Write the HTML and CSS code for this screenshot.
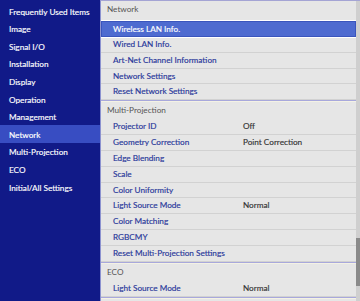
FILE: index.html
```html
<!DOCTYPE html>
<html lang="en">

<head>
    <meta charset="UTF-8">
    <title>Network Menu</title>
    <link rel="stylesheet" href="styles.css">
</head>

<body>
    <div class="screen">
        <div class="sidebar">
            <div class="sb-item">Frequently Used Items</div>
            <div class="sb-item">Image</div>
            <div class="sb-item">Signal I/O</div>
            <div class="sb-item">Installation</div>
            <div class="sb-item">Display</div>
            <div class="sb-item">Operation</div>
            <div class="sb-item">Management</div>
            <div class="sb-item active">Network</div>
            <div class="sb-item">Multi-Projection</div>
            <div class="sb-item">ECO</div>
            <div class="sb-item">Initial/All Settings</div>
        </div>

        <div class="panel">
            <div class="list">
                <div class="section first">
                    <div class="head">Network</div>
                    <div class="row selected"><span class="name">Wireless LAN Info.</span></div>
                    <div class="row"><span class="name">Wired LAN Info.</span></div>
                    <div class="row"><span class="name">Art-Net Channel Information</span></div>
                    <div class="row"><span class="name">Network Settings</span></div>
                    <div class="row"><span class="name">Reset Network Settings</span></div>
                </div>
                <div class="section">
                    <div class="head">Multi-Projection</div>
                    <div class="row"><span class="name">Projector ID</span><span class="value">Off</span></div>
                    <div class="row"><span class="name">Geometry Correction</span><span class="value">Point Correction</span></div>
                    <div class="row"><span class="name">Edge Blending</span></div>
                    <div class="row"><span class="name">Scale</span></div>
                    <div class="row"><span class="name">Color Uniformity</span></div>
                    <div class="row"><span class="name">Light Source Mode</span><span class="value">Normal</span></div>
                    <div class="row"><span class="name">Color Matching</span></div>
                    <div class="row"><span class="name">RGBCMY</span></div>
                    <div class="row"><span class="name">Reset Multi-Projection Settings</span></div>
                </div>
                <div class="section">
                    <div class="head">ECO</div>
                    <div class="row"><span class="name">Light Source Mode</span><span class="value">Normal</span></div>
                </div>
            </div>
            <div class="scrollbar">
                <div class="thumb"></div>
            </div>
        </div>
    </div>
</body>

</html>
```

FILE: styles.css
```css
* {
    box-sizing: border-box;
}

body {
    margin: 0;
    font-family: 'Lato', 'Noto Sans', sans-serif;
    font-size: 8.2px;
}

.screen {
    width: 360px;
    height: 301px;
    display: flex;
    overflow: hidden;
}

.sidebar {
    width: 100px;
    background-color: #111a88;
    padding-top: 2px;
}

.sb-item {
    height: 17.6px;
    line-height: 16px;
    padding-top: 1.6px;
    padding-left: 9px;
    color: #ffffff;
    white-space: nowrap;
    -webkit-text-stroke: 0.15px #ffffff;
}

.sb-item.active {
    background-color: #384dc2;
}

.panel {
    flex: 1;
    display: flex;
    background-color: #e6e6e6;
    border-top: 1px solid #a4a4d4;
    border-left: 1px solid #8c92d0;
    overflow: hidden;
}

.list {
    flex: 1;
}

.section {
    border-bottom: 1px solid #a8a8dc;
    box-shadow: 0 1px 0 #f4f2e4;
}

.head {
    height: 18px;
    line-height: 18px;
    padding-left: 6px;
    color: #555555;
}

.section.first .head {
    height: 20px;
    line-height: 17px;
}

.row {
    height: 15.85px;
    line-height: 15px;
    display: flex;
    padding-left: 12px;
    color: #28379a;
    border-bottom: 1px solid #d2d2d2;
    -webkit-text-stroke: 0.15px #28379a;
}

.row .name {
    width: 130px;
    white-space: nowrap;
}

.row .value {
    color: #333333;
    -webkit-text-stroke: 0.15px #333333;
}

.row.selected {
    background-color: #4e6bd0;
    color: #ffffff;
    border: 1px solid #3a55bd;
    outline: 1px solid #ffffff;
    padding-left: 11px;
    -webkit-text-stroke: 0.15px #ffffff;
}

.scrollbar {
    width: 4px;
    background-color: #cfcfcf;
    padding-top: 237px;
}

.thumb {
    height: 48px;
    background-color: #8a8a8a;
}
```
